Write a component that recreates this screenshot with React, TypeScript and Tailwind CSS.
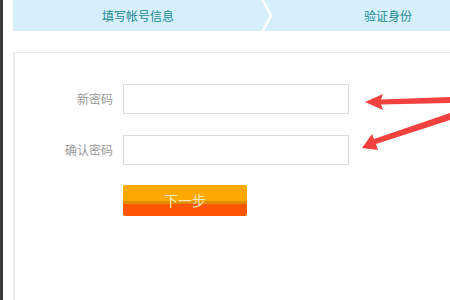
import React from 'react'

const font = { fontFamily: '"Microsoft YaHei", "Noto Sans CJK SC", sans-serif' }

function StepBar() {
  return (
    <div className="relative flex h-[31px] overflow-hidden bg-[#d5effb] text-[12px] text-[#1b8c94]">
      <div className="flex w-[250px] shrink-0 items-center justify-center">填写帐号信息</div>
      <svg className="absolute left-[247px] top-0" width="16" height="31" viewBox="0 0 16 31" aria-hidden>
        <polyline points="2,-1 11,15.5 2,32" fill="none" stroke="#ffffff" strokeWidth="2.5" />
      </svg>
      <div className="flex w-[250px] shrink-0 items-center justify-center">验证身份</div>
    </div>
  )
}

function Field({ label }: { label: string }) {
  return (
    <div className="flex items-center">
      <label className="w-[98px] shrink-0 pr-[10px] text-right text-[12px] text-[#999999]">{label}</label>
      <input
        type="password"
        className="h-[30px] w-[226px] border border-[#dcdcdc] bg-white outline-none"
      />
    </div>
  )
}

function Arrows() {
  return (
    <svg className="pointer-events-none absolute left-0 top-0" width="450" height="300" aria-hidden>
      <polygon points="365,102 383,94 381,99.5 450,97 450,103 381,104.5 383,110" fill="#f2413f" />
      <polygon points="362,148 372,134 374,139 450,113 450,120 376,144 378,150" fill="#f2413f" />
    </svg>
  )
}

export default function App() {
  return (
    <div className="relative flex h-[300px] w-[450px] overflow-hidden bg-white" style={font}>
      <div className="w-[3px] shrink-0 bg-[#3b3b3b]" />
      <div className="flex flex-1 flex-col pl-[10px]">
        <StepBar />
        <div className="mt-[21px] flex-1 border-l-2 border-t border-[#ebebeb] pl-[10px] pt-[31px]">
          <div className="flex flex-col gap-[21px]">
            <Field label="新密码" />
            <Field label="确认密码" />
          </div>
          <div className="ml-[98px] mt-[20px]">
            <button
              type="button"
              className="relative flex h-[31px] w-[124px] items-center justify-center overflow-hidden rounded-[2px] bg-[linear-gradient(#ffa902_0,#ffa902_52%,#de8e00_52%,#de8e00_62%,#ff5602_62%,#ff5602_100%)] text-[14px] text-[#fbe9b8]"
            >
              下一步
            </button>
          </div>
        </div>
      </div>
      <Arrows />
    </div>
  )
}
